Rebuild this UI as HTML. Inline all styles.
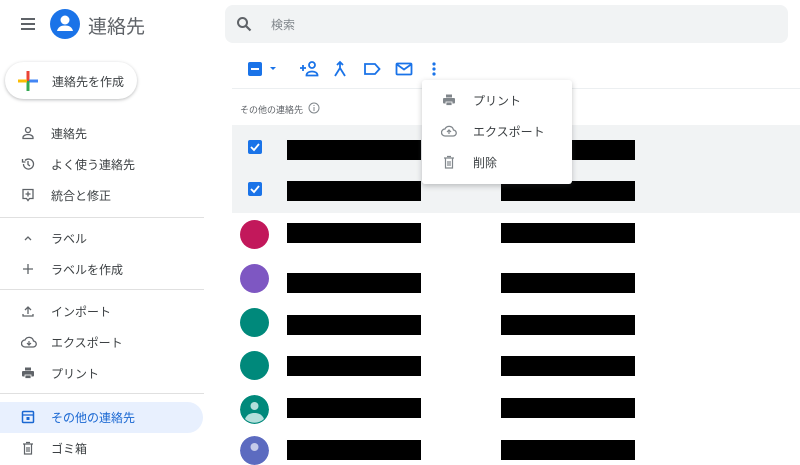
<!DOCTYPE html>
<html><head><meta charset="utf-8"><style>
*{margin:0;padding:0;box-sizing:border-box}
body{width:800px;height:450px;overflow:hidden;background:#fff;font-family:"Liberation Sans","Noto Sans CJK JP",sans-serif;color:#3c4043;position:relative}
.a{position:absolute}
.nav{position:absolute;left:0;width:204px;height:30px;display:flex;align-items:center;font-size:12px;color:#3c4043}
.nav svg{position:absolute;left:21px}
.nav span{position:absolute;left:51px}
.bar{position:absolute;height:20px;width:134px;background:#000}
.av{position:absolute;width:29px;height:29px;border-radius:50%;left:240px}
.hr{position:absolute;height:1px;background:#e0e0e0}
</style></head><body>
<!-- header -->
<svg class="a" style="left:20px;top:17px" width="16" height="14" viewBox="0 0 16 14"><path d="M1 2h14M1 7h14M1 12h14" stroke="#5f6368" stroke-width="2"/></svg>
<svg class="a" style="left:50px;top:9px" width="30" height="30" viewBox="0 0 30 30"><circle cx="15" cy="15" r="15" fill="#1a73e8"/><circle cx="15" cy="11" r="4.5" fill="#fff"/><path d="M7 22c1-4 4-5.5 8-5.5s7 1.5 8 5.5z" fill="#fff"/></svg>
<div class="a" style="left:88px;top:12px;font-size:19px;color:#5f6368">連絡先</div>
<div class="a" style="left:225px;top:5px;width:563px;height:38px;background:#f1f3f4;border-radius:8px"></div>
<svg class="a" style="left:236px;top:16px" width="16" height="16" viewBox="0 0 16 16"><circle cx="6.5" cy="6.5" r="4.5" fill="none" stroke="#5f6368" stroke-width="2"/><path d="M10 10l4.5 4.5" stroke="#5f6368" stroke-width="2.2"/></svg>
<div class="a" style="left:271px;top:16px;font-size:12px;color:#80868b">検索</div>
<!-- create button -->
<div class="a" style="left:5px;top:62px;width:132px;height:37px;border-radius:19px;background:#fff;box-shadow:0 1px 3px rgba(60,64,67,.35)"></div>
<svg class="a" style="left:17px;top:70px" width="22" height="22" viewBox="0 0 22 22"><rect x="9.5" y="1" width="3" height="10" fill="#ea4335"/><rect x="12" y="9.5" width="9" height="3" fill="#4285f4"/><rect x="9.5" y="11" width="3" height="10" fill="#34a853"/><rect x="1" y="9.5" width="9" height="3" fill="#fbbc04"/></svg>
<div class="a" style="left:52px;top:73px;font-size:12px">連絡先を作成</div>
<!-- nav -->
<div class="nav" style="top:118px"><svg width="14" height="14" viewBox="0 0 14 14"><circle cx="7" cy="4" r="2.5" fill="none" stroke="#5f6368" stroke-width="1.3"/><path d="M2 12.5v-1c0-2 3-3 5-3s5 1 5 3v1z" fill="none" stroke="#5f6368" stroke-width="1.3"/></svg><span>連絡先</span></div>
<div class="nav" style="top:149px"><svg width="14" height="14" viewBox="0 0 14 14"><path d="M2.5 7a5 5 0 1 0 1.5-3.5M1.5 2v3h3M7 4v3.5l2 1.5" fill="none" stroke="#5f6368" stroke-width="1.3"/></svg><span>よく使う連絡先</span></div>
<div class="nav" style="top:180px"><svg width="14" height="14" viewBox="0 0 14 14"><path d="M2 1.5h10v9H8.5L7 12.5 5.5 10.5H2z M7 3.5v5M4.5 6h5" fill="none" stroke="#5f6368" stroke-width="1.3"/></svg><span>統合と修正</span></div>
<div class="hr" style="left:0;top:217px;width:204px"></div>
<div class="nav" style="top:223px"><svg width="14" height="14" viewBox="0 0 14 14"><path d="M4 9l3-3 3 3" fill="none" stroke="#5f6368" stroke-width="1.3"/></svg><span>ラベル</span></div>
<div class="nav" style="top:254px"><svg width="14" height="14" viewBox="0 0 14 14"><path d="M7 2v10M2 7h10" stroke="#5f6368" stroke-width="1.3"/></svg><span>ラベルを作成</span></div>
<div class="hr" style="left:0;top:289px;width:204px"></div>
<div class="nav" style="top:296px"><svg width="14" height="14" viewBox="0 0 14 14"><path d="M7 10V3M4 6l3-3 3 3M2 10v2h10v-2" fill="none" stroke="#5f6368" stroke-width="1.3"/></svg><span>インポート</span></div>
<div class="nav" style="top:327px"><svg width="16" height="14" viewBox="0 0 16 14"><path d="M4 12h8a3 3 0 0 0 .5-6A4.5 4.5 0 0 0 4 5a3.5 3.5 0 0 0 0 7z" fill="none" stroke="#5f6368" stroke-width="1.3"/><path d="M8 6v4M6 8l2 2 2-2" fill="none" stroke="#5f6368" stroke-width="1.2"/></svg><span>エクスポート</span></div>
<div class="nav" style="top:358px"><svg width="14" height="14" viewBox="0 0 14 14"><rect x="4" y="1.5" width="6" height="3" fill="#5f6368"/><rect x="1" y="5" width="12" height="5.5" rx="1" fill="#5f6368"/><rect x="4" y="9" width="6" height="3.5" fill="#5f6368" stroke="#fff" stroke-width=".8"/></svg><span>プリント</span></div>
<div class="hr" style="left:0;top:393px;width:204px"></div>
<div class="a" style="left:0;top:402px;width:203px;height:31px;background:#e8f0fe;border-radius:0 16px 16px 0"></div>
<div class="nav" style="top:402px;color:#1967d2"><svg width="14" height="14" viewBox="0 0 14 14"><rect x="1.5" y="1.5" width="11" height="11" rx="1" fill="none" stroke="#1967d2" stroke-width="1.5"/><path d="M1.5 5h11" stroke="#1967d2" stroke-width="1.3"/><rect x="5.5" y="7" width="3" height="3" fill="#1967d2"/></svg><span>その他の連絡先</span></div>
<div class="nav" style="top:433px"><svg width="14" height="14" viewBox="0 0 14 14"><path d="M2 3h10M3.5 3v10h7V3M5 1.5h4M6 6v5M8 6v5" fill="none" stroke="#5f6368" stroke-width="1.2"/></svg><span>ゴミ箱</span></div>
<!-- toolbar -->
<div class="a" style="left:248px;top:62px;width:14px;height:14px;background:#1a73e8;border-radius:2px"></div>
<div class="a" style="left:251px;top:68px;width:8px;height:2px;background:#fff"></div>
<svg class="a" style="left:268px;top:66px" width="10" height="6" viewBox="0 0 10 6"><path d="M2 1h6L5 4z" fill="#1a73e8"/></svg>
<svg class="a" style="left:299px;top:60px" width="22" height="18" viewBox="0 0 22 18"><path d="M1 8h6M4 5v6" stroke="#1a73e8" stroke-width="1.8"/><circle cx="13" cy="5" r="3" fill="none" stroke="#1a73e8" stroke-width="1.8"/><path d="M7.5 15.5c0-3 3-4 5.5-4s5.5 1 5.5 4z" fill="none" stroke="#1a73e8" stroke-width="1.8"/></svg>
<svg class="a" style="left:333px;top:60px" width="14" height="18" viewBox="0 0 14 18"><path d="M7 2v6M4 5l3-3 3 3M7 8l-5 8M7 8l5 8" fill="none" stroke="#1a73e8" stroke-width="1.8"/></svg>
<svg class="a" style="left:363px;top:62px" width="18" height="14" viewBox="0 0 18 14"><path d="M2 2h10l4.5 5-4.5 5H2z" fill="none" stroke="#1a73e8" stroke-width="1.8"/></svg>
<svg class="a" style="left:395px;top:62px" width="18" height="14" viewBox="0 0 18 14"><rect x="1.5" y="1.5" width="15" height="11" rx="1" fill="none" stroke="#1a73e8" stroke-width="1.8"/><path d="M2 2.5l7 5 7-5" fill="none" stroke="#1a73e8" stroke-width="1.8"/></svg>
<svg class="a" style="left:431px;top:61px" width="6" height="16" viewBox="0 0 6 16"><circle cx="3" cy="3" r="1.6" fill="#1a73e8"/><circle cx="3" cy="8" r="1.6" fill="#1a73e8"/><circle cx="3" cy="13" r="1.6" fill="#1a73e8"/></svg>
<div class="hr" style="left:232px;top:88px;width:568px;background:#eceff1"></div>
<div class="a" style="left:240px;top:103px;font-size:9px;color:#5f6368">その他の連絡先</div>
<svg class="a" style="left:308px;top:102px" width="12" height="12" viewBox="0 0 12 12"><circle cx="6" cy="6" r="5" fill="none" stroke="#80868b" stroke-width="1"/><path d="M6 5v4M6 3v1" stroke="#80868b" stroke-width="1"/></svg>
<!-- selected rows -->
<div class="a" style="left:232px;top:125px;width:568px;height:88px;background:#f1f3f4"></div>
<div class="a" style="left:248px;top:140px;width:14px;height:14px;background:#1a73e8;border-radius:2px"></div>
<svg class="a" style="left:248px;top:140px" width="14" height="14" viewBox="0 0 14 14"><path d="M3 7l3 3 5-6" fill="none" stroke="#fff" stroke-width="1.8"/></svg>
<div class="a" style="left:248px;top:182px;width:14px;height:14px;background:#1a73e8;border-radius:2px"></div>
<svg class="a" style="left:248px;top:182px" width="14" height="14" viewBox="0 0 14 14"><path d="M3 7l3 3 5-6" fill="none" stroke="#fff" stroke-width="1.8"/></svg>
<div class="bar" style="left:287px;top:140px"></div><div class="bar" style="left:501px;top:140px"></div>
<div class="bar" style="left:287px;top:181px"></div><div class="bar" style="left:501px;top:181px"></div>
<!-- rows -->
<div class="av" style="top:220px;background:#c2185b"></div>
<div class="av" style="top:264px;background:#7e57c2"></div>
<div class="av" style="top:308px;background:#00897b"></div>
<div class="av" style="top:351px;background:#00897b"></div>
<svg class="av" style="top:395px" width="29" height="29" viewBox="0 0 29 29"><circle cx="14.5" cy="14.5" r="14.5" fill="#00897b"/><circle cx="14.5" cy="11" r="4" fill="#b2dfdb"/><path d="M5 24c2-5 6-6 9.5-6s7.5 1 9.5 6a14 14 0 0 1-19 0z" fill="#b2dfdb"/></svg>
<svg class="av" style="top:436px" width="29" height="29" viewBox="0 0 29 29"><circle cx="14.5" cy="14.5" r="14.5" fill="#5c6bc0"/><circle cx="14.5" cy="11" r="4" fill="#c5cae9"/></svg>
<div class="bar" style="left:287px;top:223px"></div><div class="bar" style="left:501px;top:223px"></div>
<div class="bar" style="left:287px;top:273px"></div><div class="bar" style="left:501px;top:273px"></div>
<div class="bar" style="left:287px;top:315px"></div><div class="bar" style="left:501px;top:315px"></div>
<div class="bar" style="left:287px;top:356px"></div><div class="bar" style="left:501px;top:356px"></div>
<div class="bar" style="left:287px;top:398px"></div><div class="bar" style="left:501px;top:398px"></div>
<div class="bar" style="left:287px;top:440px"></div><div class="bar" style="left:501px;top:440px"></div>
<!-- menu -->
<div class="a" style="left:422px;top:80px;width:150px;height:104px;background:#fff;box-shadow:0 2px 6px rgba(60,64,67,.3);border-radius:3px"></div>
<svg class="a" style="left:442px;top:93px" width="14" height="14" viewBox="0 0 14 14"><rect x="4" y="1.5" width="6" height="3" fill="#80868b"/><rect x="1" y="5" width="12" height="5.5" rx="1" fill="#80868b"/><rect x="4" y="9" width="6" height="3.5" fill="#80868b" stroke="#fff" stroke-width=".8"/></svg>
<div class="a" style="left:473px;top:92px;font-size:12px">プリント</div>
<svg class="a" style="left:441px;top:124px" width="16" height="14" viewBox="0 0 16 14"><path d="M4 12h8a3 3 0 0 0 .5-6A4.5 4.5 0 0 0 4 5a3.5 3.5 0 0 0 0 7z" fill="none" stroke="#80868b" stroke-width="1.3"/><path d="M8 10V6M6 8l2-2 2 2" fill="none" stroke="#80868b" stroke-width="1.2"/></svg>
<div class="a" style="left:473px;top:123px;font-size:12px">エクスポート</div>
<svg class="a" style="left:442px;top:155px" width="14" height="14" viewBox="0 0 14 14"><path d="M2 3h10M3.5 3v10h7V3M5 1.5h4M6 6v5M8 6v5" fill="none" stroke="#80868b" stroke-width="1.2"/></svg>
<div class="a" style="left:473px;top:154px;font-size:12px">削除</div>
</body></html>
